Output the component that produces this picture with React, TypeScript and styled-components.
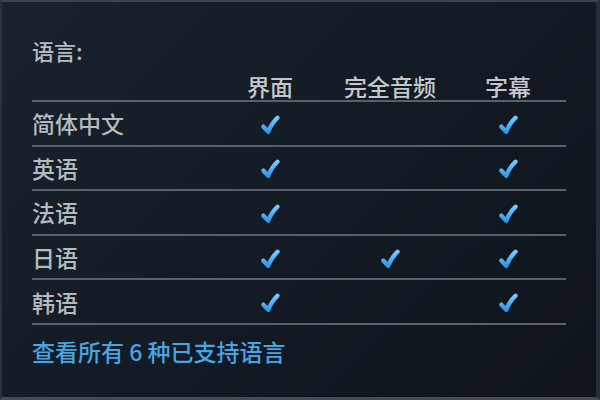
import React from "react";
import styled, { createGlobalStyle } from "styled-components";

const Global = createGlobalStyle`
  html, body { margin: 0; padding: 0; background: #10151c; }
  #root { width: 600px; height: 400px; }
`;

const Panel = styled.div`
  box-sizing: border-box;
  width: 600px;
  height: 400px;
  padding: 34px 34px 0 30px;
  background: linear-gradient(135deg, #19222d 0%, #131a23 55%, #0f141b 100%);
  border-top: 2px solid #3a4450;
  border-left: 2px solid #29313c;
  border-right: 4px solid #262d37;
  border-bottom: 3px solid #454b54;
  font-family: "Noto Sans CJK SC", "Noto Sans", sans-serif;
  color: #b5babe;
`;

const Title = styled.div`
  font-size: 22px;
  font-weight: 500;
  line-height: 28px;
  height: 28px;
`;

const Grid = styled.div`
  display: grid;
  grid-template-columns: 190px 96px 144px 92px 12px;
  width: 534px;
`;

const Cell = styled.div<{ $head?: boolean; $center?: boolean }>`
  display: flex;
  align-items: center;
  justify-content: ${(p) => (p.$center ? "center" : "flex-start")};
  font-size: 23px;
  font-weight: 500;
  line-height: 28px;
  white-space: nowrap;
  color: ${(p) => (p.$head ? "#c4c7ca" : "#b5babe")};
  height: ${(p) => (p.$head ? "28px" : "42.6px")};
  padding-top: ${(p) => (p.$head ? "8px" : "0")};
  padding-bottom: 0;
  border-bottom: 2px solid #5a6068;
`;

const Link = styled.a`
  display: block;
  margin-top: 12px;
  font-size: 23px;
  font-weight: 500;
  line-height: 28px;
  color: #46a6e4;
  text-decoration: none;
`;

const CheckSvg = styled.svg`
  display: block;
  margin-top: 3px;
`;

const Check = () => (
  <CheckSvg width="22" height="22" viewBox="0 0 20 20">
    <defs>
      <linearGradient id="cg" x1="0" y1="0" x2="0" y2="1">
        <stop offset="0" stopColor="#70ccff" />
        <stop offset="1" stopColor="#3497e4" />
      </linearGradient>
    </defs>
    <path
      d="M4 11.5 L8.4 16.2 C10.6 10.6 13.4 6.6 16.8 3.4"
      fill="none"
      stroke="url(#cg)"
      strokeWidth="4"
      strokeLinecap="round"
      strokeLinejoin="round"
    />
  </CheckSvg>
);

const rows: [string, boolean, boolean, boolean][] = [
  ["简体中文", true, false, true],
  ["英语", true, false, true],
  ["法语", true, false, true],
  ["日语", true, true, true],
  ["韩语", true, false, true],
];

export default function App() {
  return (
    <>
      <Global />
      <Panel>
        <Title>语言:</Title>
        <Grid>
          <Cell $head />
          <Cell $head $center>界面</Cell>
          <Cell $head $center>完全音频</Cell>
          <Cell $head $center>字幕</Cell>
          <Cell $head />
          {rows.map(([name, a, b, c]) => (
            <React.Fragment key={name}>
              <Cell>{name}</Cell>
              <Cell $center>{a && <Check />}</Cell>
              <Cell $center>{b && <Check />}</Cell>
              <Cell $center>{c && <Check />}</Cell>
              <Cell />
            </React.Fragment>
          ))}
        </Grid>
        <Link href="#">查看所有 6 种已支持语言</Link>
      </Panel>
    </>
  );
}
